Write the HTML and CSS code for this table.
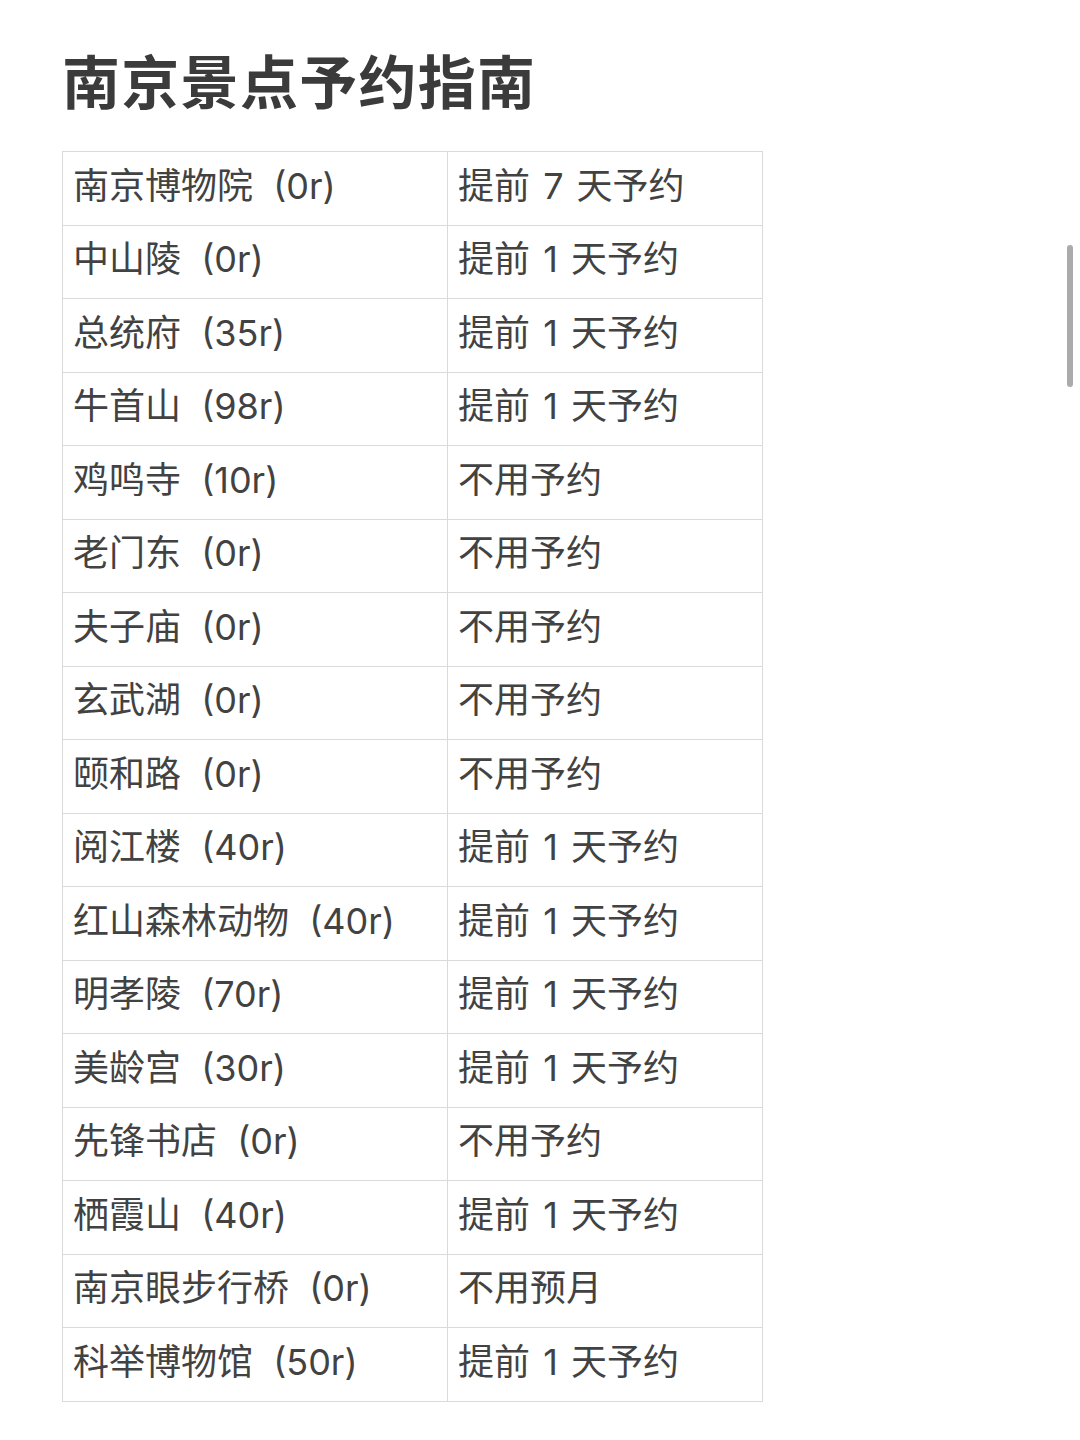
FILE: index.html
```html
<!DOCTYPE html>
<html lang="zh-CN">
<head>
<meta charset="utf-8">
<title>南京景点予约指南</title>
<link rel="stylesheet" href="styles.css">
</head>
<body>
<main class="page">
  <h1 class="title">南京景点予约指南</h1>
  <table class="guide">
    <colgroup><col class="c-name"><col class="c-note"></colgroup>
    <tbody>
      <tr><td class="name">南京博物院 (0r)</td><td class="note">提前 7 天予约</td></tr>
      <tr><td class="name">中山陵 (0r)</td><td class="note">提前 1 天予约</td></tr>
      <tr><td class="name">总统府 (35r)</td><td class="note">提前 1 天予约</td></tr>
      <tr><td class="name">牛首山 (98r)</td><td class="note">提前 1 天予约</td></tr>
      <tr><td class="name">鸡鸣寺 (10r)</td><td class="note">不用予约</td></tr>
      <tr><td class="name">老门东 (0r)</td><td class="note">不用予约</td></tr>
      <tr><td class="name">夫子庙 (0r)</td><td class="note">不用予约</td></tr>
      <tr><td class="name">玄武湖 (0r)</td><td class="note">不用予约</td></tr>
      <tr><td class="name">颐和路 (0r)</td><td class="note">不用予约</td></tr>
      <tr><td class="name">阅江楼 (40r)</td><td class="note">提前 1 天予约</td></tr>
      <tr><td class="name">红山森林动物 (40r)</td><td class="note">提前 1 天予约</td></tr>
      <tr><td class="name">明孝陵 (70r)</td><td class="note">提前 1 天予约</td></tr>
      <tr><td class="name">美龄宫 (30r)</td><td class="note">提前 1 天予约</td></tr>
      <tr><td class="name">先锋书店 (0r)</td><td class="note">不用予约</td></tr>
      <tr><td class="name">栖霞山 (40r)</td><td class="note">提前 1 天予约</td></tr>
      <tr><td class="name">南京眼步行桥 (0r)</td><td class="note">不用预月</td></tr>
      <tr><td class="name">科举博物馆 (50r)</td><td class="note">提前 1 天予约</td></tr>
    </tbody>
  </table>
</main>
<div class="scrollbar"></div>
</body>
</html>
```

FILE: styles.css
```css
html, body {
  margin: 0;
  padding: 0;
  background: #ffffff;
}
body {
  font-family: Inter, "Noto Sans CJK SC", sans-serif;
  color: #444444;
}
.page {
  padding: 44px 0 0 62px;
}
.title {
  margin: 0 0 37px 0;
  font-family: "Noto Sans CJK SC", sans-serif;
  font-size: 58px;
  line-height: 70px;
  font-weight: 700;
  color: #3b3b3b;
  letter-spacing: 1.3px;
}
.guide {
  border-collapse: collapse;
  width: 700px;
  table-layout: fixed;
}
.c-name { width: 385px; }
.c-note { width: 315px; }
.guide tr {
  height: 73.5px;
}
.guide td {
  border: 1px solid #dadada;
  padding: 0 10px 5px 10px;
  font-size: 36px;
  line-height: 1;
  color: #424242;
  vertical-align: middle;
  white-space: nowrap;
}
.guide .name {
  word-spacing: 10px;
}
.guide .note {
  word-spacing: 3px;
}
.scrollbar {
  position: absolute;
  left: 1067px;
  top: 245px;
  width: 6px;
  height: 142px;
  border-radius: 3px;
  background: #ababab;
}
```
